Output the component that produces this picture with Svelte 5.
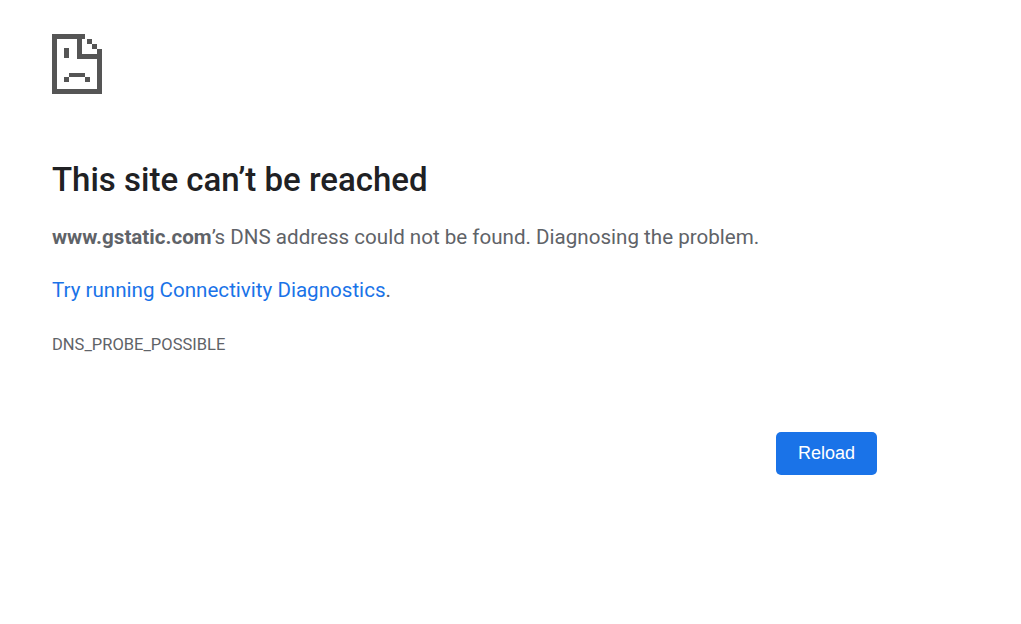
<script lang="ts">
	// Page text lives here so the markup stays about layout.
	const host = 'www.gstatic.com';
	const errorCode = 'DNS_PROBE_POSSIBLE';
</script>

<main class="page">
	<svg class="icon" viewBox="0 0 50 60" aria-hidden="true">
		<!-- outline of the page with its folded corner -->
		<rect x="0" y="0" width="33" height="5" />
		<rect x="0" y="0" width="5" height="60" />
		<rect x="0" y="55" width="50" height="5" />
		<rect x="45" y="20" width="5" height="40" />
		<rect x="25" y="0" width="5" height="25" />
		<rect x="25" y="20" width="25" height="5" />
		<!-- stair-stepped fold -->
		<rect x="35" y="5" width="5" height="5" />
		<rect x="40" y="10" width="5" height="5" />
		<rect x="45" y="15" width="5" height="5" />
		<!-- face -->
		<rect x="12" y="14" width="5" height="10" />
		<rect x="17" y="39" width="16" height="4" />
		<rect x="12" y="43" width="5" height="5" />
		<rect x="33" y="43" width="5" height="5" />
	</svg>

	<h1>This site can’t be reached</h1>
	<p class="summary"><strong>{host}</strong>’s DNS address could not be found. Diagnosing the problem.</p>
	<p class="suggestion"><a href="#diagnostics">Try running Connectivity Diagnostics</a>.</p>
	<div class="code">{errorCode}</div>

	<div class="actions">
		<button type="button">Reload</button>
	</div>
</main>

<style>
	:global(body) {
		background: #fff;
	}

	.page {
		box-sizing: border-box;
		width: 877px;
		padding: 34px 0 0 52px;
		font-family: Roboto, 'Liberation Sans', sans-serif;
		color: #5f6368;
	}

	.icon {
		display: block;
		width: 50px;
		height: 60px;
		fill: #555;
		filter: blur(0.4px);
	}

	h1 {
		margin: 66px 0 0;
		font-size: 33px;
		font-weight: 500;
		line-height: 40px;
		color: #202124;
	}

	.summary {
		margin: 22px 0 0;
		font-size: 20.58px;
		line-height: 30px;
	}

	strong {
		font-weight: 700;
	}

	.suggestion {
		margin: 23px 0 0;
		font-size: 20.58px;
		line-height: 30px;
	}

	a {
		color: #1a73e8;
		text-decoration: none;
	}

	.code {
		margin-top: 30px;
		font-size: 16.5px;
		line-height: 20px;
	}

	.actions {
		display: flex;
		justify-content: flex-end;
		margin-top: 77px;
	}

	button {
		width: 101px;
		height: 43px;
		padding: 0;
		border: 0;
		border-radius: 5px;
		background: #1a73e8;
		color: #fff;
		font-family: 'Liberation Sans', Arial, sans-serif;
		font-size: 18px;
	}
</style>
